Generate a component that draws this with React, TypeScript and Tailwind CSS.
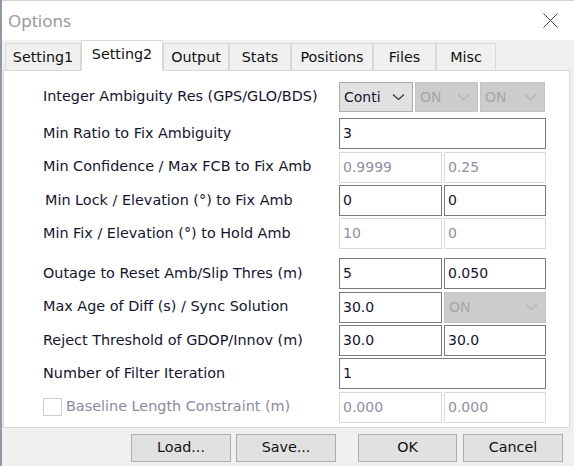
import React from "react";

const ui = "font-['DejaVu_Sans',sans-serif]";

const tabs = [
  { name: "Setting1", w: "w-[76px]" },
  { name: "Setting2", w: "w-[82px]", active: true },
  { name: "Output", w: "w-[66px]" },
  { name: "Stats", w: "w-[62px]" },
  { name: "Positions", w: "w-[82px]" },
  { name: "Files", w: "w-[63px]" },
  { name: "Misc", w: "w-[60px]" },
];

function Chevron({ disabled }: { disabled?: boolean }) {
  return (
    <svg width="13" height="8" viewBox="0 0 13 8" fill="none">
      <polyline
        points="1,1.5 6.5,6.5 12,1.5"
        stroke={disabled ? "#b3b3b3" : "#333"}
        strokeWidth="1.2"
      />
    </svg>
  );
}

function Select({ value, disabled, w }: { value: string; disabled?: boolean; w: string }) {
  return (
    <div
      className={`flex h-full shrink-0 items-center justify-between pl-[4px] pr-[7px] border ${w} ${
        disabled
          ? "border-[#c4c4c4] bg-[#cccccc] text-[#a6a6a6]"
          : "border-[#adadad] bg-[#e1e1e1] text-[#141430]"
      }`}
    >
      <span>{value}</span>
      <Chevron disabled={disabled} />
    </div>
  );
}

function Edit({ value, disabled, w }: { value: string; disabled?: boolean; w: string }) {
  return (
    <div
      className={`flex h-full shrink-0 items-center bg-white pl-[3px] ${w} ${
        disabled
          ? "border border-[#dadada] text-[#9090a2]"
          : "border-[1.5px] border-[#7a7a7a] text-[#141430]"
      }`}
    >
      {value}
    </div>
  );
}

function Row({
  label,
  children,
  className = "",
  labelClass = "",
}: {
  label: React.ReactNode;
  children: React.ReactNode;
  className?: string;
  labelClass?: string;
}) {
  return (
    <div className={`flex h-[31px] items-center ${className}`}>
      <div className={`w-[296px] shrink-0 text-[14.4px] ${labelClass}`}>{label}</div>
      <div className="flex h-full w-[207px] gap-[2px]">{children}</div>
    </div>
  );
}

function Button({ label, w }: { label: string; w: string }) {
  return (
    <div
      className={`flex h-[28px] items-center justify-center border border-[#adadad] bg-[#e1e1e1] text-[#111] ${w}`}
    >
      {label}
    </div>
  );
}

export default function App() {
  return (
    <div
      className={`h-[466px] w-[574px] overflow-hidden border-l-2 border-l-[#8e99a6] bg-[#f0f0f0] text-[14px] ${ui}`}
    >
      {/* Title bar */}
      <div className="flex h-[40px] items-center justify-between border-t border-t-[#d0d0d0] bg-white pl-[6px] pr-[16px]">
        <span className="font-['Noto_Sans',sans-serif] text-[17px] text-[#999999]">Options</span>
        <svg width="15" height="15" viewBox="0 0 15 15">
          <path d="M0.5 0.5 L14.5 14.5 M14.5 0.5 L0.5 14.5" stroke="#444" strokeWidth="1" />
        </svg>
      </div>

      {/* Tabs */}
      <div className="flex h-[30px] items-end pl-[3px] text-[14.3px]">
        {tabs.map((t) =>
          t.active ? (
            <div
              key={t.name}
              className={`relative z-10 -mb-[1px] flex h-[31px] items-start justify-center border border-b-0 border-[#d9d9d9] bg-white pt-[3px] text-[#111] ${t.w}`}
            >
              {t.name}
            </div>
          ) : (
            <div
              key={t.name}
              className={`flex h-[27px] items-center justify-center border border-b-0 border-[#d9d9d9] bg-[#f0f0f0] pt-[2px] text-[#111] ${t.w}`}
            >
              {t.name}
            </div>
          )
        )}
      </div>

      {/* Panel */}
      <div className="ml-[1px] flex h-[358px] w-[567px] flex-col gap-[2.3px] border border-[#d9d9d9] bg-white pl-[39px] pt-[11px] text-[#141430]">
        <div className="flex h-[30px] items-center">
          <div className="w-[296px] shrink-0 text-[14.4px]">Integer Ambiguity Res (GPS/GLO/BDS)</div>
          <div className="flex h-full gap-[2px]">
            <Select value="Conti" w="w-[74px]" />
            <Select value="ON" disabled w="w-[63px]" />
            <Select value="ON" disabled w="w-[65px]" />
          </div>
        </div>
        <Row label="Min Ratio to Fix Ambiguity" className="mt-[4px]">
          <Edit value="3" w="w-[207px]" />
        </Row>
        <Row label="Min Confidence / Max FCB to Fix Amb">
          <Edit value="0.9999" disabled w="w-[103px]" />
          <Edit value="0.25" disabled w="w-[102px]" />
        </Row>
        <Row label="Min Lock / Elevation (°) to Fix Amb" labelClass="pl-[2px]">
          <Edit value="0" w="w-[103px]" />
          <Edit value="0" w="w-[102px]" />
        </Row>
        <Row label="Min Fix / Elevation (°) to Hold Amb">
          <Edit value="10" disabled w="w-[103px]" />
          <Edit value="0" disabled w="w-[102px]" />
        </Row>
        <Row label="Outage to Reset Amb/Slip Thres (m)" className="mt-[7px]">
          <Edit value="5" w="w-[103px]" />
          <Edit value="0.050" w="w-[102px]" />
        </Row>
        <Row label="Max Age of Diff (s) / Sync Solution">
          <Edit value="30.0" w="w-[103px]" />
          <Select value="ON" disabled w="w-[102px]" />
        </Row>
        <Row label="Reject Threshold of GDOP/Innov (m)">
          <Edit value="30.0" w="w-[103px]" />
          <Edit value="30.0" w="w-[102px]" />
        </Row>
        <Row label="Number of Filter Iteration">
          <Edit value="1" w="w-[207px]" />
        </Row>
        <Row
          label={
            <div className="flex items-center gap-[4px] text-[#8a8a9e]">
              <span className="h-[18px] w-[19px] border border-[#cccccc] bg-white" />
              Baseline Length Constraint (m)
            </div>
          }
        >
          <Edit value="0.000" disabled w="w-[103px]" />
          <Edit value="0.000" disabled w="w-[102px]" />
        </Row>
      </div>

      {/* Buttons */}
      <div className="mt-[6px] flex pl-[129px] text-[14.3px]">
        <Button label="Load..." w="w-[100px]" />
        <div className="w-[5px]" />
        <Button label="Save..." w="w-[100px]" />
        <div className="w-[22px]" />
        <Button label="OK" w="w-[99px]" />
        <div className="w-[6px]" />
        <Button label="Cancel" w="w-[100px]" />
      </div>
    </div>
  );
}
